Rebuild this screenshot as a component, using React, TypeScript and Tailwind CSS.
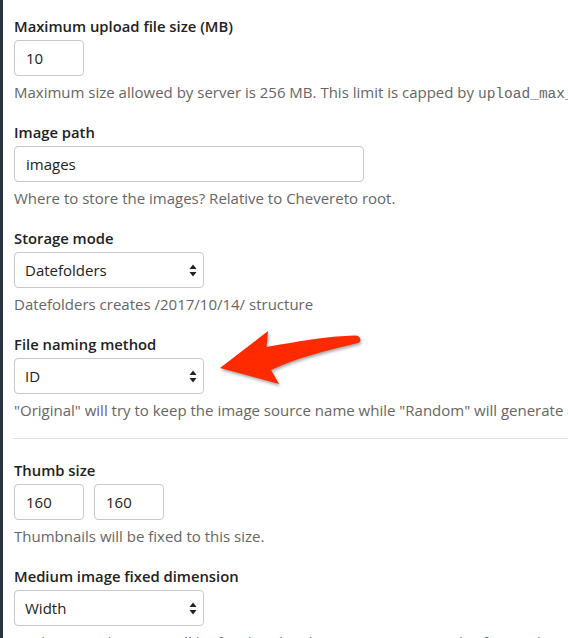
import type { ReactNode } from 'react';

const font = { fontFamily: '"Open Sans", "Liberation Sans", sans-serif' };

function Arrows() {
  return (
    <svg width="8" height="13" viewBox="0 0 8 13" className="absolute right-[7px] top-[12px] pointer-events-none">
      <path d="M4 0.5 L7.5 5 H0.5 Z" fill="#222" />
      <path d="M4 12.5 L7.5 8 H0.5 Z" fill="#222" />
    </svg>
  );
}

function Select({ value, width }: { value: string; width: string }) {
  return (
    <div className={`relative ${width}`}>
      <div className="h-[36px] w-full flex items-center pl-[10px] border border-[#c8c8c8] rounded-[4px] bg-white text-[15px] text-[#222]">
        {value}
      </div>
      <Arrows />
    </div>
  );
}

function Input({ value, width }: { value: string; width: string }) {
  return (
    <div className={`h-[36px] ${width} flex items-center pl-[11px] border border-[#c8c8c8] rounded-[4px] bg-white text-[15px] text-[#222]`}>
      {value}
    </div>
  );
}

function Field({ label, help, children }: { label: string; help: ReactNode; children: ReactNode }) {
  return (
    <div className="mb-[20px]">
      <div className="h-[20px] leading-[20px] text-[14.8px] font-semibold text-[#222] mb-[4px]">{label}</div>
      {children}
      <div className="mt-[6px] h-[20px] leading-[20px] text-[15px] text-[#666] whitespace-nowrap">{help}</div>
    </div>
  );
}

export default function App() {
  return (
    <div className="w-[568px] h-[638px] overflow-hidden bg-white flex relative" style={font}>
      <div className="w-[3px] shrink-0 bg-[#27343f]" />
      <div className="flex-1 min-w-0 pl-[11px] pt-[16px]">
        <Field
          label="Maximum upload file size (MB)"
          help={
            <>
              Maximum size allowed by server is 256 MB. This limit is capped by{' '}
              <code className="text-[14.5px]" style={{ fontFamily: '"Liberation Mono", "Courier New", monospace' }}>upload_max_filesize</code>
            </>
          }
        >
          <Input value="10" width="w-[70px]" />
        </Field>
        <Field label="Image path" help="Where to store the images? Relative to Chevereto root.">
          <Input value="images" width="w-[350px]" />
        </Field>
        <Field label="Storage mode" help="Datefolders creates /2017/10/14/ structure">
          <Select value="Datefolders" width="w-[190px]" />
        </Field>
        <div>
          <div className="h-[20px] leading-[20px] text-[14.8px] font-semibold text-[#222] mb-[4px]">File naming method</div>
          <Select value="ID" width="w-[190px]" />
          <div className="mt-[6px] h-[20px] leading-[20px] text-[15px] text-[#666] whitespace-nowrap">
            "Original" will try to keep the image source name while "Random" will generate a random name.
          </div>
        </div>
        <div className="mt-[18px] mb-[21px] h-px bg-[#e2e2e2] -ml-px" />
        <Field label="Thumb size" help="Thumbnails will be fixed to this size.">
          <div className="flex gap-[10px]">
            <Input value="160" width="w-[70px]" />
            <Input value="160" width="w-[70px]" />
          </div>
        </Field>
        <Field
          label="Medium image fixed dimension"
          help='Medium sized images will be fixed to this dimension. For example, if you select "Width" that dimension will be fixed.'
        >
          <Select value="Width" width="w-[190px]" />
        </Field>
      </div>
      <svg
        width="180"
        height="80"
        viewBox="0 0 180 80"
        className="absolute left-[200px] top-[320px]"
        style={{ filter: 'drop-shadow(1px 2px 1.5px rgba(0,0,0,0.35))' }}
      >
        <path
          d="M20 48 L68 11 L66.5 27 C95 22 128 16 155 15.5 C161 15.5 162 21.5 158 23 C128 30 96 38 71 50 L79 64 Z"
          fill="#ff2a00"
        />
      </svg>
    </div>
  );
}
